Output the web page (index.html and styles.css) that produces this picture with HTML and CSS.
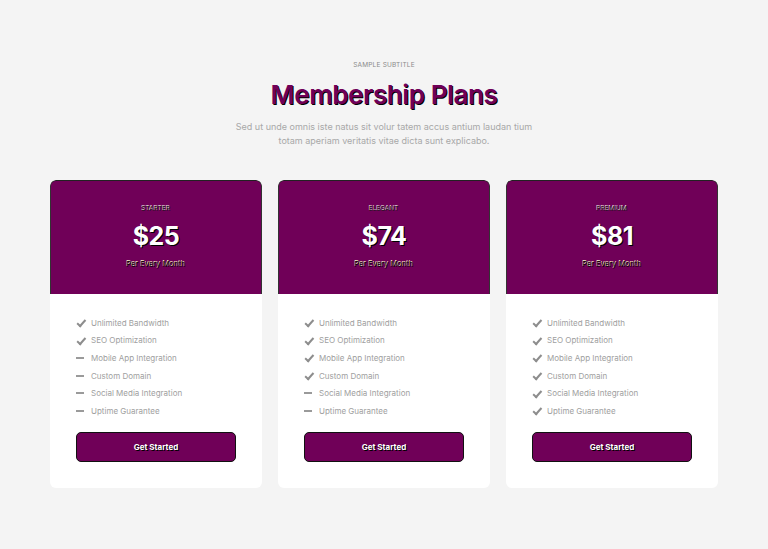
FILE: index.html
```html
<!DOCTYPE html>
<html>
<head>
<meta charset="utf-8">
<link rel="stylesheet" href="styles.css">
</head>
<body>
<section class="pricing">
  <div class="intro">
    <div class="eyebrow">SAMPLE SUBTITLE</div>
    <h1 class="title">Membership Plans</h1>
    <p class="lead">Sed ut unde omnis iste natus sit volur tatem accus antium laudan tium<br>totam aperiam veritatis vitae dicta sunt explicabo.</p>
  </div>
  <div class="plans">
    <div class="plan">
      <div class="plan-head">
        <div class="plan-name">STARTER</div>
        <div class="plan-price">$25</div>
        <div class="plan-period">Per Every Month</div>
      </div>
      <div class="plan-body">
        <ul class="features">
          <li><span class="ic ok"></span>Unlimited Bandwidth</li>
          <li><span class="ic ok"></span>SEO Optimization</li>
          <li><span class="ic no"></span>Mobile App Integration</li>
          <li><span class="ic no"></span>Custom Domain</li>
          <li><span class="ic no"></span>Social Media Integration</li>
          <li><span class="ic no"></span>Uptime Guarantee</li>
        </ul>
        <a class="btn">Get Started</a>
      </div>
    </div>
    <div class="plan">
      <div class="plan-head">
        <div class="plan-name">ELEGANT</div>
        <div class="plan-price">$74</div>
        <div class="plan-period">Per Every Month</div>
      </div>
      <div class="plan-body">
        <ul class="features">
          <li><span class="ic ok"></span>Unlimited Bandwidth</li>
          <li><span class="ic ok"></span>SEO Optimization</li>
          <li><span class="ic ok"></span>Mobile App Integration</li>
          <li><span class="ic ok"></span>Custom Domain</li>
          <li><span class="ic no"></span>Social Media Integration</li>
          <li><span class="ic no"></span>Uptime Guarantee</li>
        </ul>
        <a class="btn">Get Started</a>
      </div>
    </div>
    <div class="plan">
      <div class="plan-head">
        <div class="plan-name">PREMIUM</div>
        <div class="plan-price">$81</div>
        <div class="plan-period">Per Every Month</div>
      </div>
      <div class="plan-body">
        <ul class="features">
          <li><span class="ic ok"></span>Unlimited Bandwidth</li>
          <li><span class="ic ok"></span>SEO Optimization</li>
          <li><span class="ic ok"></span>Mobile App Integration</li>
          <li><span class="ic ok"></span>Custom Domain</li>
          <li><span class="ic ok"></span>Social Media Integration</li>
          <li><span class="ic ok"></span>Uptime Guarantee</li>
        </ul>
        <a class="btn">Get Started</a>
      </div>
    </div>
  </div>
</section>
</body>
</html>
```

FILE: styles.css
```css
* { box-sizing: border-box; }
html, body { margin: 0; padding: 0; }
body {
  background: #f4f4f4;
  font-family: "Inter", "Noto Sans", sans-serif;
  width: 768px;
  height: 549px;
  overflow: hidden;
}
.pricing {
  padding: 61px 50px 0;
}
.intro {
  text-align: center;
}
.eyebrow {
  font-size: 6.5px;
  color: #8a8a8a;
  letter-spacing: 0.2px;
  line-height: 8px;
}
.title {
  margin: 9px 0 0;
  font-size: 26px;
  font-weight: 600;
  line-height: 34px;
  color: #700058;
  letter-spacing: -0.4px;
  text-shadow: 1px 1px 0 #000;
}
.lead {
  margin: 8px 0 0;
  font-size: 9px;
  line-height: 14px;
  color: #a8a8a8;
}
.plans {
  margin-top: 32px;
  display: grid;
  grid-template-columns: repeat(3, 212px);
  column-gap: 16px;
}
.plan {
  background: #fff;
  border-radius: 6px;
  overflow: hidden;
}
.plan-head {
  background: #700058;
  height: 114px;
  border-radius: 6px 6px 0 0;
  border-top: 1.5px solid #222;
  border-left: 1px solid #333;
  border-right: 1px solid #333;
  text-align: center;
  padding-top: 24px;
}
.plan-name {
  font-size: 6.5px;
  line-height: 8px;
  color: #1a1a1a;
  text-shadow: -0.6px -0.6px 0 #e8e8e0;
}
.plan-price {
  margin-top: 8px;
  font-size: 25px;
  font-weight: 700;
  line-height: 30px;
  color: #fff;
  letter-spacing: -0.5px;
  text-shadow: 1px 1px 0 #000;
}
.plan-period {
  margin-top: 9px;
  font-size: 7.5px;
  line-height: 10px;
  color: #000;
  text-shadow: -0.6px -0.6px 0 #f4f4c8;
}
.plan-body {
  padding: 20px 26px 26px;
}
.features {
  list-style: none;
  margin: 0;
  padding: 0;
}
.features li {
  display: flex;
  align-items: center;
  height: 17.6px;
  font-size: 8px;
  color: #a0a0a0;
}
.ic {
  width: 10px;
  height: 8px;
  margin-right: 5px;
  flex: none;
  position: relative;
}
.ic.ok::before {
  content: "";
  position: absolute;
  left: 3px;
  top: -0.5px;
  width: 3.2px;
  height: 6.5px;
  border: solid #8d8d8d;
  border-width: 0 2px 2px 0;
  transform: rotate(42deg);
}
.ic.no::before {
  content: "";
  position: absolute;
  left: 0;
  top: 3px;
  width: 8px;
  height: 2px;
  background: #9a9a9a;
}
.btn {
  display: flex;
  align-items: center;
  justify-content: center;
  margin-top: 12px;
  height: 30px;
  border-radius: 5px;
  background: #700058;
  border: 1px solid #111;
  color: #fff;
  font-size: 8px;
  font-weight: 700;
  text-shadow: 1px 1px 0 #000;
}
```
